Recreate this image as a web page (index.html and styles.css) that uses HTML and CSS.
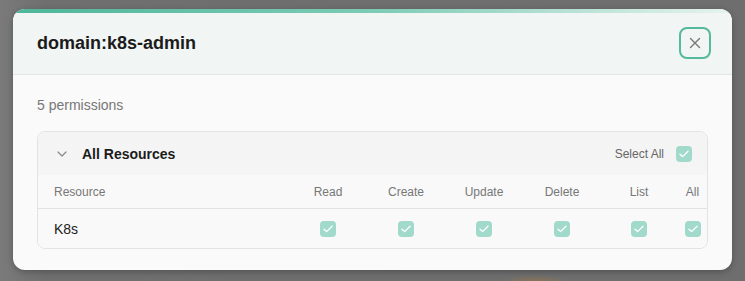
FILE: index.html
```html
<!DOCTYPE html>
<html lang="en">
<head>
    <meta charset="UTF-8">
    <meta name="viewport" content="width=device-width, initial-scale=1.0">
    <title>Role permissions</title>
    <link rel="stylesheet" href="styles.css">
</head>
<body>
    <div class="modal-card">
        <div class="modal-accent"></div>
        <div class="modal-header">
            <h2 class="modal-title">domain:k8s-admin</h2>
            <button class="close-btn" aria-label="Close">
                <svg width="12" height="12" viewBox="0 0 12 12"><path d="M1.5 1.5l9 9M10.5 1.5l-9 9" stroke="#777" stroke-width="1.4" stroke-linecap="round"/></svg>
            </button>
        </div>
        <div class="modal-body">
            <p class="perm-count">5 permissions</p>
            <div class="perm-card">
                <div class="perm-card-header">
                    <div class="group-title">
                        <svg class="chevron" width="10" height="6" viewBox="0 0 10 6"><path d="M1 1l4 4 4-4" fill="none" stroke="#888" stroke-width="1.2" stroke-linecap="round" stroke-linejoin="round"/></svg>
                        <span>All Resources</span>
                    </div>
                    <label class="select-all">
                        Select All
                        <span class="check"><svg width="10" height="8" viewBox="0 0 10 8"><path d="M1 4.2l2.6 2.4L9 1.2" fill="none" stroke="#fff" stroke-width="1.3" stroke-linecap="round" stroke-linejoin="round"/></svg></span>
                    </label>
                </div>
                <div class="perm-table">
                    <div class="perm-row head">
                        <span class="cell-name">Resource</span>
                        <span>Read</span>
                        <span>Create</span>
                        <span>Update</span>
                        <span>Delete</span>
                        <span>List</span>
                        <span>All</span>
                    </div>
                    <div class="perm-row">
                        <span class="cell-name res">K8s</span>
                        <span><span class="check"><svg width="10" height="8" viewBox="0 0 10 8"><path d="M1 4.2l2.6 2.4L9 1.2" fill="none" stroke="#fff" stroke-width="1.3" stroke-linecap="round" stroke-linejoin="round"/></svg></span></span>
                        <span><span class="check"><svg width="10" height="8" viewBox="0 0 10 8"><path d="M1 4.2l2.6 2.4L9 1.2" fill="none" stroke="#fff" stroke-width="1.3" stroke-linecap="round" stroke-linejoin="round"/></svg></span></span>
                        <span><span class="check"><svg width="10" height="8" viewBox="0 0 10 8"><path d="M1 4.2l2.6 2.4L9 1.2" fill="none" stroke="#fff" stroke-width="1.3" stroke-linecap="round" stroke-linejoin="round"/></svg></span></span>
                        <span><span class="check"><svg width="10" height="8" viewBox="0 0 10 8"><path d="M1 4.2l2.6 2.4L9 1.2" fill="none" stroke="#fff" stroke-width="1.3" stroke-linecap="round" stroke-linejoin="round"/></svg></span></span>
                        <span><span class="check"><svg width="10" height="8" viewBox="0 0 10 8"><path d="M1 4.2l2.6 2.4L9 1.2" fill="none" stroke="#fff" stroke-width="1.3" stroke-linecap="round" stroke-linejoin="round"/></svg></span></span>
                        <span><span class="check"><svg width="10" height="8" viewBox="0 0 10 8"><path d="M1 4.2l2.6 2.4L9 1.2" fill="none" stroke="#fff" stroke-width="1.3" stroke-linecap="round" stroke-linejoin="round"/></svg></span></span>
                    </div>
                </div>
            </div>
        </div>
    </div>
</body>
</html>
```

FILE: styles.css
```css
* {
    margin: 0;
    padding: 0;
    box-sizing: border-box;
}

body {
    font-family: 'Liberation Sans', Arial, sans-serif;
    width: 745px;
    height: 281px;
    overflow: hidden;
    background:
        radial-gradient(ellipse 40px 14px at 535px 288px, rgba(170, 120, 50, 0.7), rgba(170, 120, 50, 0) 100%),
        linear-gradient(90deg, #7a7a7a 0%, #6f6f6f 6%, #6e6e6e 100%);
    padding: 9px 13px;
}

.modal-card {
    width: 719px;
    background: #fafafa;
    border-radius: 12px;
    overflow: hidden;
    box-shadow: 0 2px 6px rgba(0, 0, 0, 0.25);
}

.modal-accent {
    height: 4px;
    background: linear-gradient(90deg, #4fb699 0%, #7dcbb5 50%, #e6f3ee 100%);
}

.modal-header {
    height: 62px;
    background: #f1f5f3;
    border-bottom: 1px solid #e2e5e4;
    display: flex;
    align-items: center;
    justify-content: space-between;
    padding: 0 21px 0 24px;
}

.modal-title {
    font-size: 18px;
    font-weight: bold;
    color: #1b1b1b;
}

.close-btn {
    width: 32px;
    height: 32px;
    border: 2px solid #55b99d;
    border-radius: 8px;
    background: transparent;
    display: flex;
    align-items: center;
    justify-content: center;
    margin-top: -2px;
}

.modal-body {
    padding: 20px 24px 21px;
}

.perm-count {
    font-size: 14px;
    line-height: 20px;
    color: #777;
    margin-bottom: 16px;
}

.perm-card {
    border: 1px solid #e3e3e3;
    border-radius: 8px;
    overflow: hidden;
}

.perm-card-header {
    height: 43px;
    background: linear-gradient(180deg, #f4f4f4 0%, #f5f5f5 100%);
    display: flex;
    align-items: center;
    justify-content: space-between;
    padding: 0 15px 0 19px;
}

.group-title {
    display: flex;
    align-items: center;
    gap: 15px;
    font-size: 14px;
    font-weight: bold;
    color: #1b1b1b;
}

.select-all {
    display: flex;
    align-items: center;
    gap: 12px;
    font-size: 12px;
    color: #666;
}

.check {
    width: 16px;
    height: 16px;
    border-radius: 4px;
    background: #a1d9ca;
    display: inline-flex;
    align-items: center;
    justify-content: center;
}

.perm-table {
    background: #f9f9f9;
}

.perm-row {
    display: grid;
    grid-template-columns: 235px 78px 78px 78px 78px 76px 31px;
    align-items: center;
    padding-left: 16px;
    height: 39px;
}

.perm-row > span {
    display: flex;
    justify-content: center;
    align-items: center;
}

.perm-row > .cell-name {
    justify-content: flex-start;
}

.perm-row.head {
    height: 34px;
    border-bottom: 1px solid #e2e2e2;
    font-size: 12px;
    color: #777;
}

.res {
    font-size: 14px;
    color: #222;
}
```
